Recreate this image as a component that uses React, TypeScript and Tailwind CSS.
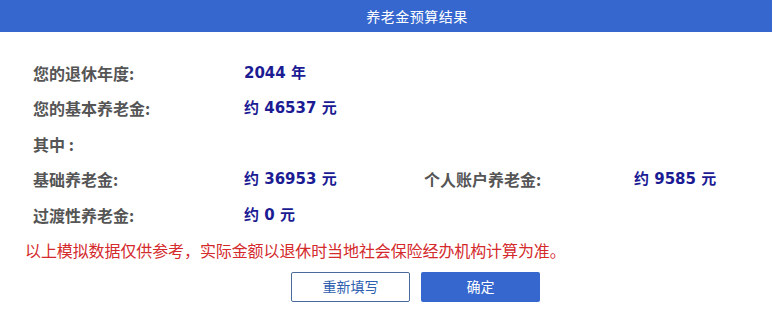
import React from 'react';

const cjk = '"Noto Sans CJK SC", "Noto Sans", sans-serif';
const num = '"DejaVu Sans", "Noto Sans CJK SC", sans-serif';

interface Row {
  label: string;
  value?: string;
  label2?: string;
  value2?: string;
}

const rows: Row[] = [
  { label: '您的退休年度:', value: '2044 年' },
  { label: '您的基本养老金:', value: '约 46537 元' },
  { label: '其中 :' },
  { label: '基础养老金:', value: '约 36953 元', label2: '个人账户养老金:', value2: '约 9585 元' },
  { label: '过渡性养老金:', value: '约 0 元' },
];

const App: React.FC = () => {
  return (
    <div className="w-[772px] h-[323px] bg-white overflow-hidden" style={{ fontFamily: cjk }}>
      <div className="h-[32px] bg-[#3567cf] flex items-center justify-center pl-[62px]">
        <span className="text-white text-[14px] tracking-[0.5px]">养老金预算结果</span>
      </div>

      <div className="pt-[23px] pl-[33px]">
        {rows.map((row, i) => (
          <div key={i} className="grid grid-cols-[211px_180px_210px_1fr] h-[35.5px] items-center">
            <span className="text-[16px] font-bold text-[#555]">{row.label}</span>
            <span className="text-[15px] font-bold text-[#1b1b94]" style={{ fontFamily: num }}>
              {row.value}
            </span>
            <span className="text-[16px] font-bold text-[#555]">{row.label2}</span>
            <span className="text-[15px] font-bold text-[#1b1b94]" style={{ fontFamily: num }}>
              {row.value2}
            </span>
          </div>
        ))}
      </div>

      <p className="pl-[25px] mt-[5px] text-[16px] tracking-[-0.1px] leading-[24px] text-[#d42a2c]">
        以上模拟数据仅供参考，实际金额以退休时当地社会保险经办机构计算为准。
      </p>

      <div className="flex pl-[291px] gap-[11px] mt-[10px]">
        <button className="w-[119px] h-[30px] border border-[#4a6a9c] rounded-[2px] text-[14px] text-[#2f5fb0] bg-white">
          重新填写
        </button>
        <button className="w-[119px] h-[30px] rounded-[2px] text-[14px] text-white bg-[#3567cf]">
          确定
        </button>
      </div>
    </div>
  );
};

export default App;
